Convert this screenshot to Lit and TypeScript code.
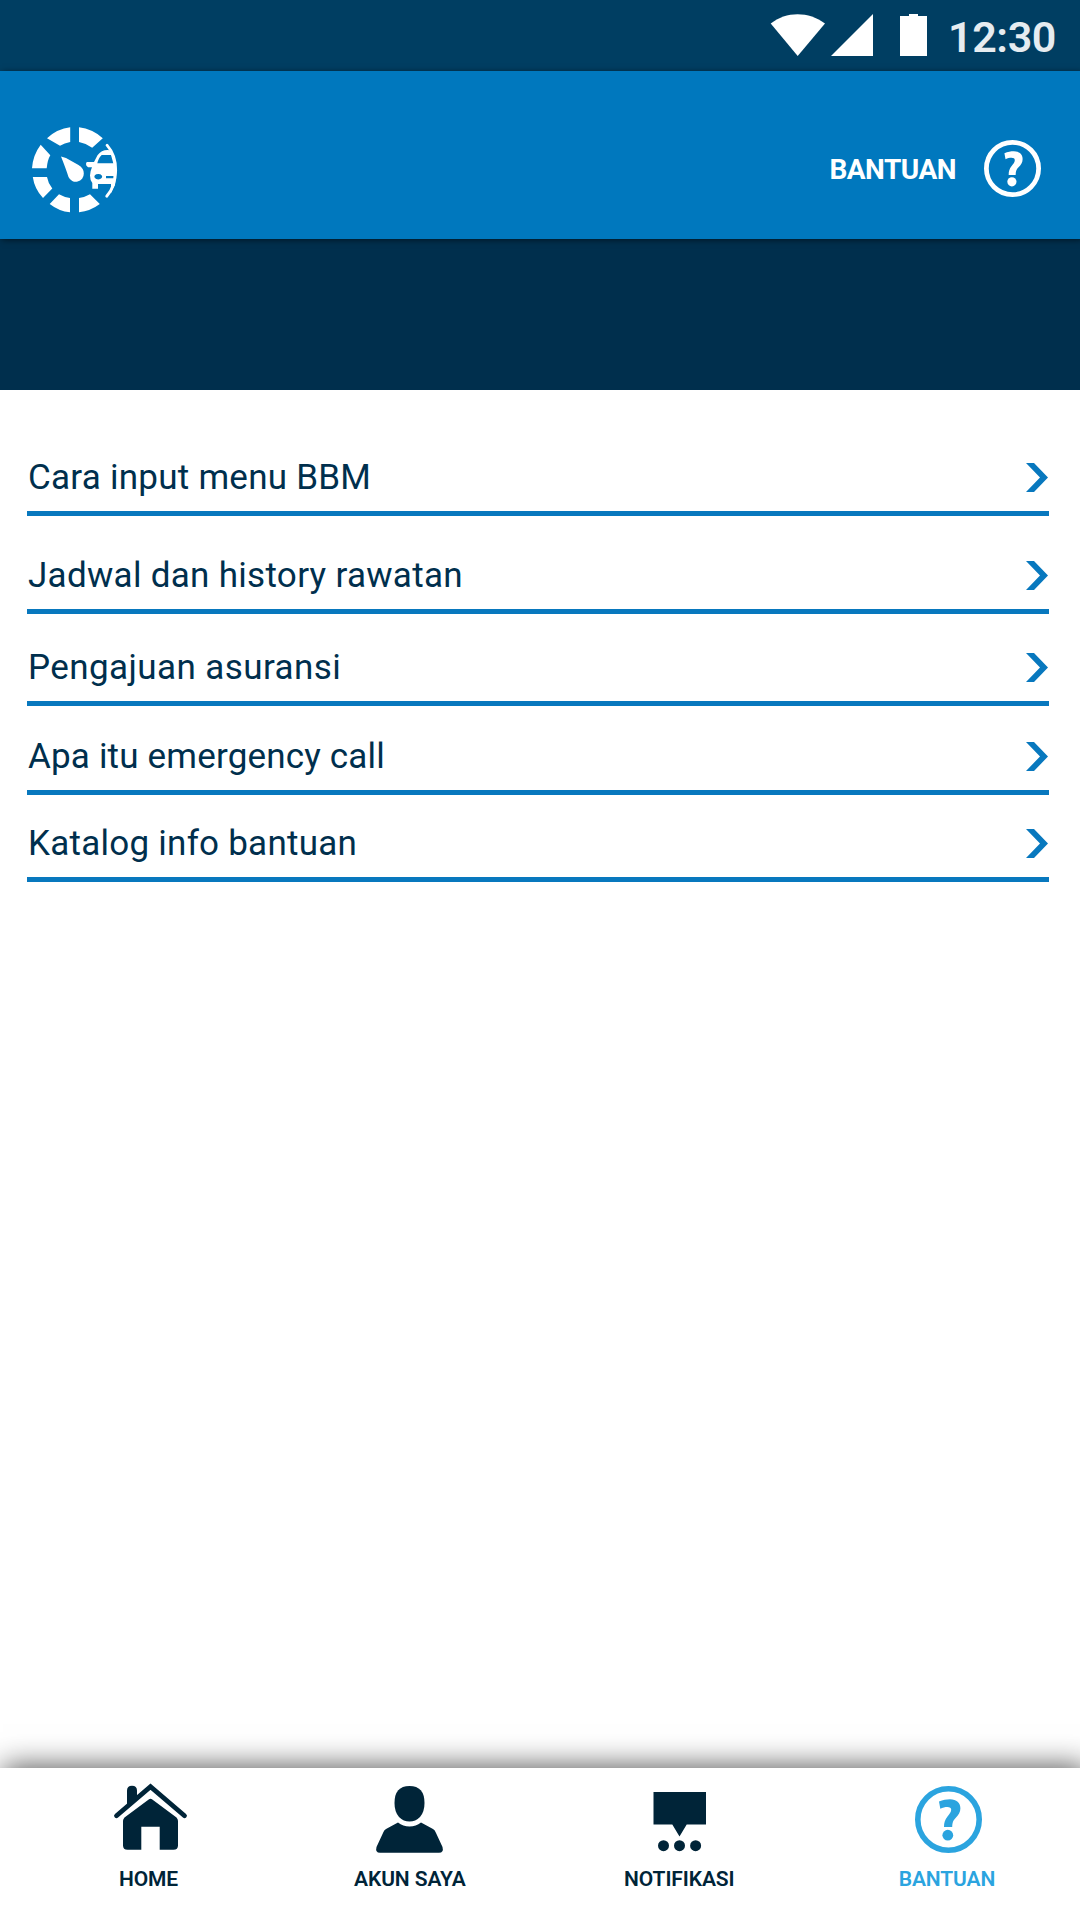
import { LitElement, html, css, svg } from "lit";
import { customElement, property } from "lit/decorators.js";

const question = svg`
  <circle cx="33.5" cy="33.5" r="30.7" fill="none" stroke="currentColor" stroke-width="5.6" />
  <path d="M24 15.6C28 14 31.500 13.300 35 13.300C41.500 13.300 45.400 16.800 45.400 22.300C45.400 26.500 43.500 29 40.600 32C38 34.700 37.400 36.500 37.200 41H29C29 36.500 29.800 34 32.500 30.500C34.800 27.600 36.200 25.800 36.200 23.700C36.200 21.800 34.800 21 32.300 21C30 21 27.800 21.600 25.300 22.700Z" fill="currentColor" />
  <circle cx="32.8" cy="49.200" r="5.400" fill="currentColor" />
`;

@customElement("help-icon")
export class HelpIcon extends LitElement {
  static styles = css`
    :host { display: block; }
    .icon { display: block; width: 100%; height: 100%; }
  `;
  render() {
    return html`<svg class="icon" viewBox="0 0 67 67">${question}</svg>`;
  }
}

@customElement("status-bar")
export class StatusBar extends LitElement {
  static styles = css`
    :host { display: flex; justify-content: flex-end; align-items: center; height: 71px; box-sizing: border-box; padding-right: 24px; background: #003e62; }
    .icons { display: block; width: 158px; height: 42px; margin: 0 20px 1px 0; }
    .time { color: #e6ecf0; font-weight: 600; font-size: 43px; line-height: 50px; padding-top: 2px; letter-spacing: -0.4px; }
  `;
  render() {
    return html`
      <svg class="icons" viewBox="0 0.5 158 42" fill="#fff">
        <path d="M0.700 10C16 -2.500 39 -2.500 55 10L27.700 42.500Z" />
        <path d="M61 42.500L103 0.500V42.500Z" />
        <path d="M130 2.500h9v-2h9v2h9V42.500h-27z" />
      </svg>
      <span class="time">12:30</span>
    `;
  }
}

@customElement("app-header")
export class AppHeader extends LitElement {
  static styles = css`
    :host { display: flex; justify-content: space-between; align-items: center; height: 168px; box-sizing: border-box; padding: 27px 39px 0 32px; background: #0078be; box-shadow: 2px 1px 6px rgba(0, 0, 0, 0.55); position: relative; }
    .logo { display: block; width: 86px; height: 86px; margin-top: 3px; }
    .help { display: flex; align-items: center; gap: 28px; color: #fff; font-weight: 700; font-size: 28px; line-height: 34px; }
    .title { padding-top: 2px; letter-spacing: -0.5px; }
    .badge { width: 57px; height: 57px; }
  `;
  render() {
    return html`
      <svg class="logo" viewBox="0 0 86 86" fill="#fff">
        <path d="M38.200 0.300V15Q32.500 16 28 18.800L15 11.200Q25.500 1.700 38.200 0.300Z" />
        <path d="M47 0.300Q60.500 2 70.800 11.200L60.200 20.700Q54 16.300 47 15Z" />
        <path d="M8.700 17.800L18.300 28.300Q15.500 33 14.700 41.200H0Q1 28 8.700 17.800Z" />
        <path d="M0.800 50H15Q16 56 20.300 61.500L11 71Q2.500 62 0.800 50Z" />
        <path d="M27 67.300Q32 70.200 38 71V85.300Q27 84.300 17.700 77Z" />
        <path d="M47 71Q53 70.200 58 67.300L67.800 77Q58.500 84 47 85.300Z" />
        <path d="M29 29.500L34 31L46.500 38Q52 41.500 51.800 46.500A8 8 0 0 1 36.500 50Q34 42 29 29.500Z" />
        <path d="M75 18.200Q84 28.500 83.700 43.500Q83.400 59.500 74.700 69.300" fill="none" stroke="#fff" stroke-width="2.8" stroke-linecap="round" />
        <path fill-rule="evenodd" d="M79.500 23.500Q70.500 21.500 65.500 28.300L62 35H54.700Q53.500 36.500 54.300 38.500L56 40.300H60Q58 44.500 58 48.500Q58 53 60.300 56V61.700H66V57H79V66L83 58L84.700 44L83 31ZM65.300 36.300Q66.800 30.500 69.700 28H79L81.300 36.300ZM66.300 46.900A3.900 2.800 0 1 1 66.200 46.900ZM74 49H81.500V51.200H74Z" />
      </svg>
      <div class="help">
        <span class="title">BANTUAN</span>
        <help-icon class="badge"></help-icon>
      </div>
    `;
  }
}

@customElement("help-row")
export class HelpRow extends LitElement {
  @property() label = "";
  static styles = css`
    :host { display: flex; justify-content: space-between; align-items: center; height: 65px; box-sizing: border-box; padding: 0 1px 8px 1.5px; border-bottom: 5px solid #0878be; }
    .label { color: #002f4d; font-size: 35px; line-height: 41px; letter-spacing: var(--tracking, 0.25px); }
    .arrow { display: block; width: 22px; height: 29px; }
  `;
  render() {
    return html`
      <span class="label">${this.label}</span>
      <svg class="arrow" viewBox="0 0 22 29"><path d="M0 0H8L22 14.500L8 29H0L14 14.500Z" fill="#0878be" /></svg>
    `;
  }
}

const icons = {
  home: svg`
    <path d="M3.500 34.700L37.500 5.600L71.500 34.700" fill="none" stroke="currentColor" stroke-width="4.800" stroke-linecap="round" stroke-linejoin="miter" />
    <path d="M14 26V9.500Q14 4.700 19 4.700Q24 4.700 24 9.500V18Z" />
    <path d="M39.300 18.500L63.500 36.500Q65 38 65 40V64.500Q65 68.700 60.500 68.700H46.700V45.700H28.300V68.700H14.500Q10 68.700 10 64.500V40Q10 38 11.500 36.500L35.700 18.500Q37.500 17.200 39.300 18.500Z" />`,
  account: svg`
    <path d="M37.500 5Q52.500 5 52.500 22Q52.500 31 48 36Q43.500 40.500 37.500 40.500Q31.500 40.500 27 36Q22.500 31 22.500 22Q22.500 5 37.500 5Z" />
    <path d="M26 41.500Q31 45.500 37.500 45.500Q44 45.500 49 41.500L61 48Q63 49 64 52L70.500 66Q72 71.800 67 71.800H8Q3 71.800 4.500 66L11 52Q12 49 14 48Z" />`,
  notify: svg`
    <path d="M11.500 11H64V43.500H44.700L37.500 55.500L30.300 43.500H11.500Z" />
    <circle cx="21.500" cy="64.700" r="5.500" /><circle cx="37.500" cy="64.700" r="5.500" /><circle cx="53.600" cy="64.700" r="5.500" />`,
  help: svg`<g transform="translate(4 5)">${question}</g>`,
};

@customElement("nav-item")
export class NavItem extends LitElement {
  @property() label = "";
  @property() icon: keyof typeof icons = "home";
  static styles = css`
    :host { display: flex; flex-direction: column; align-items: center; color: #002438; }
    .icon { display: block; width: 75px; height: 75px; }
    .label { margin-top: 10px; padding-right: var(--label-inset, 0); font-size: 21px; line-height: 26px; font-weight: 600; letter-spacing: -0.1px; white-space: nowrap; }
  `;
  render() {
    return html`
      <svg class="icon" viewBox="0 0 75 75" fill="currentColor">${icons[this.icon]}</svg>
      <span class="label">${this.label}</span>
    `;
  }
}

@customElement("app-root")
export class AppRoot extends LitElement {
  static styles = css`
    :host { display: flex; flex-direction: column; width: 1080px; height: 1920px; background: #fff; font-family: Roboto, "Liberation Sans", sans-serif; overflow: hidden; }
    .band { height: 151px; background: #002f4d; }
    .list { flex: 1; display: flex; flex-direction: column; padding: 61px 31px 0 26.5px; }
    .history { margin-top: 33px; --tracking: 0.3px; }
    .insurance { margin-top: 27px; --tracking: 0.42px; }
    .emergency { margin-top: 24px; --tracking: 0.18px; }
    .catalog { margin-top: 22px; }
    .nav { display: grid; grid-template-columns: 301px 217.6px 321.4px 217px; height: 152px; box-sizing: border-box; padding-top: 13px; background: #fff; box-shadow: 5px 0 28px 2px rgba(0, 0, 0, 0.66); }
    .inset { --label-inset: 4px; }
    .active { --label-inset: 3px; color: #2ba4df; }
  `;
  render() {
    return html`
      <status-bar></status-bar>
      <app-header></app-header>
      <div class="band"></div>
      <main class="list">
        <help-row label="Cara input menu BBM"></help-row>
        <help-row class="history" label="Jadwal dan history rawatan"></help-row>
        <help-row class="insurance" label="Pengajuan asuransi"></help-row>
        <help-row class="emergency" label="Apa itu emergency call"></help-row>
        <help-row class="catalog" label="Katalog info bantuan"></help-row>
      </main>
      <nav class="nav">
        <nav-item class="inset" icon="home" label="HOME"></nav-item>
        <nav-item icon="account" label="AKUN SAYA"></nav-item>
        <nav-item icon="notify" label="NOTIFIKASI"></nav-item>
        <nav-item class="active" icon="help" label="BANTUAN"></nav-item>
      </nav>
    `;
  }
}
